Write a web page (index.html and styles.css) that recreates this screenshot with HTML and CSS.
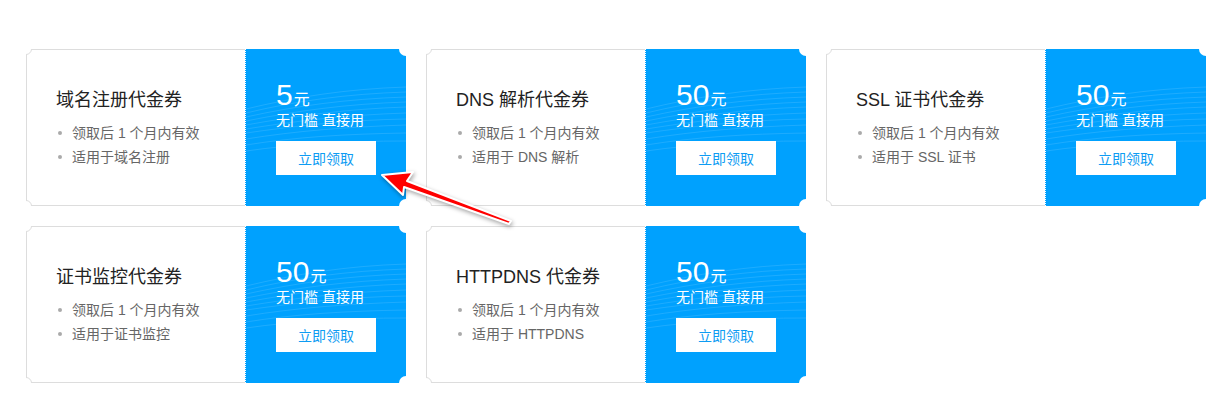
FILE: index.html
```html
<!DOCTYPE html>
<html lang="zh-CN">
<head>
    <meta charset="UTF-8">
    <title>代金券</title>
    <link rel="stylesheet" href="styles.css">
</head>
<body>
    <!-- Список купонов -->
    <div class="coupons">
        <div class="coupon">
            <div class="coupon-info">
                <h3>域名注册代金券</h3>
                <ul>
                    <li>领取后 1 个月内有效</li>
                    <li>适用于域名注册</li>
                </ul>
            </div>
            <div class="coupon-value">
                <svg class="waves" viewBox="0 0 161 157" preserveAspectRatio="none">
                    <path d="M0 60 C50 48 100 40 161 38 M0 64 C50 52 100 45 161 43 M0 68 C50 57 100 50 161 48 M0 72 C50 62 100 55 161 53 M0 76 C50 67 100 60 161 58 M0 80 C50 72 100 66 161 64 M0 84 C50 77 100 71 161 70 M0 90 C50 82 100 78 161 76 M0 96 C50 88 100 85 161 84 M0 102 C50 95 100 92 161 92"/>
                </svg>
                <div class="amount">5<span>元</span></div>
                <div class="note">无门槛 直接用</div>
                <button class="take-btn">立即领取</button>
            </div>
        </div>
        <div class="coupon">
            <div class="coupon-info">
                <h3>DNS 解析代金券</h3>
                <ul>
                    <li>领取后 1 个月内有效</li>
                    <li>适用于 DNS 解析</li>
                </ul>
            </div>
            <div class="coupon-value">
                <svg class="waves" viewBox="0 0 161 157" preserveAspectRatio="none">
                    <path d="M0 60 C50 48 100 40 161 38 M0 64 C50 52 100 45 161 43 M0 68 C50 57 100 50 161 48 M0 72 C50 62 100 55 161 53 M0 76 C50 67 100 60 161 58 M0 80 C50 72 100 66 161 64 M0 84 C50 77 100 71 161 70 M0 90 C50 82 100 78 161 76 M0 96 C50 88 100 85 161 84 M0 102 C50 95 100 92 161 92"/>
                </svg>
                <div class="amount">50<span>元</span></div>
                <div class="note">无门槛 直接用</div>
                <button class="take-btn">立即领取</button>
            </div>
        </div>
        <div class="coupon">
            <div class="coupon-info">
                <h3>SSL 证书代金券</h3>
                <ul>
                    <li>领取后 1 个月内有效</li>
                    <li>适用于 SSL 证书</li>
                </ul>
            </div>
            <div class="coupon-value">
                <svg class="waves" viewBox="0 0 161 157" preserveAspectRatio="none">
                    <path d="M0 60 C50 48 100 40 161 38 M0 64 C50 52 100 45 161 43 M0 68 C50 57 100 50 161 48 M0 72 C50 62 100 55 161 53 M0 76 C50 67 100 60 161 58 M0 80 C50 72 100 66 161 64 M0 84 C50 77 100 71 161 70 M0 90 C50 82 100 78 161 76 M0 96 C50 88 100 85 161 84 M0 102 C50 95 100 92 161 92"/>
                </svg>
                <div class="amount">50<span>元</span></div>
                <div class="note">无门槛 直接用</div>
                <button class="take-btn">立即领取</button>
            </div>
        </div>
        <div class="coupon">
            <div class="coupon-info">
                <h3>证书监控代金券</h3>
                <ul>
                    <li>领取后 1 个月内有效</li>
                    <li>适用于证书监控</li>
                </ul>
            </div>
            <div class="coupon-value">
                <svg class="waves" viewBox="0 0 161 157" preserveAspectRatio="none">
                    <path d="M0 60 C50 48 100 40 161 38 M0 64 C50 52 100 45 161 43 M0 68 C50 57 100 50 161 48 M0 72 C50 62 100 55 161 53 M0 76 C50 67 100 60 161 58 M0 80 C50 72 100 66 161 64 M0 84 C50 77 100 71 161 70 M0 90 C50 82 100 78 161 76 M0 96 C50 88 100 85 161 84 M0 102 C50 95 100 92 161 92"/>
                </svg>
                <div class="amount">50<span>元</span></div>
                <div class="note">无门槛 直接用</div>
                <button class="take-btn">立即领取</button>
            </div>
        </div>
        <div class="coupon">
            <div class="coupon-info">
                <h3>HTTPDNS 代金券</h3>
                <ul>
                    <li>领取后 1 个月内有效</li>
                    <li>适用于 HTTPDNS</li>
                </ul>
            </div>
            <div class="coupon-value">
                <svg class="waves" viewBox="0 0 161 157" preserveAspectRatio="none">
                    <path d="M0 60 C50 48 100 40 161 38 M0 64 C50 52 100 45 161 43 M0 68 C50 57 100 50 161 48 M0 72 C50 62 100 55 161 53 M0 76 C50 67 100 60 161 58 M0 80 C50 72 100 66 161 64 M0 84 C50 77 100 71 161 70 M0 90 C50 82 100 78 161 76 M0 96 C50 88 100 85 161 84 M0 102 C50 95 100 92 161 92"/>
                </svg>
                <div class="amount">50<span>元</span></div>
                <div class="note">无门槛 直接用</div>
                <button class="take-btn">立即领取</button>
            </div>
        </div>
    </div>

    <!-- Красная стрелка-указатель -->
    <svg class="pointer" width="1222" height="406" viewBox="0 0 1222 406">
        <polygon points="382,175 413,172 407,181 511,221 509,224 404,187 403,195"/>
    </svg>
</body>
</html>
```

FILE: styles.css
```css
/* Основной стиль */
body {
    margin: 0;
    padding: 0;
    background: #fff;
    font-family: "Liberation Sans", "Noto Sans CJK SC", sans-serif;
    position: relative;
}
.coupons {
    display: grid;
    grid-template-columns: repeat(3, 380px);
    grid-auto-rows: 157px;
    gap: 20px;
    padding: 49px 0 0 26px;
}
.coupon {
    display: flex;
    height: 157px;
    overflow: hidden;
}

/* Левая часть купона */
.coupon-info {
    position: relative;
    width: 219px;
    box-sizing: border-box;
    border: 1px solid #ddd;
    border-right: none;
    padding: 38px 0 0 29px;
}
.coupon-info::before,
.coupon-info::after {
    content: "";
    position: absolute;
    left: -7px;
    width: 12px;
    height: 12px;
    box-sizing: border-box;
    border: 1px solid #ddd;
    border-radius: 50%;
    background: #fff;
}
.coupon-info::before {
    top: -7px;
}
.coupon-info::after {
    bottom: -7px;
}
.coupon-info h3 {
    margin: 0;
    font-size: 18px;
    font-weight: normal;
    line-height: 24px;
    color: #222;
}
.coupon-info ul {
    list-style: none;
    margin: 9px 0 0;
    padding: 0;
}
.coupon-info li {
    position: relative;
    padding-left: 16px;
    font-size: 14px;
    line-height: 24px;
    color: #666;
}
.coupon-info li::before {
    content: "";
    position: absolute;
    left: 2px;
    top: 10px;
    width: 4px;
    height: 4px;
    border-radius: 50%;
    background: #aaa;
}

/* Правая синяя часть */
.coupon-value {
    position: relative;
    width: 161px;
    box-sizing: border-box;
    background: #00a1fe;
    border-left: 1px dotted #fff;
    padding: 31px 0 0 30px;
    color: #fff;
}
.coupon-value::before,
.coupon-value::after {
    content: "";
    position: absolute;
    right: -7px;
    width: 14px;
    height: 14px;
    border-radius: 50%;
    background: #fff;
    z-index: 2;
}
.coupon-value::before {
    top: -7px;
}
.coupon-value::after {
    bottom: -7px;
}
.waves {
    position: absolute;
    left: 0;
    top: 0;
    width: 100%;
    height: 100%;
}
.waves path {
    fill: none;
    stroke: rgba(255, 255, 255, 0.12);
    stroke-width: 1;
}
.amount {
    position: relative;
    font-size: 30px;
    line-height: 30px;
    height: 30px;
}
.amount span {
    font-size: 16px;
    margin-left: 1px;
}
.note {
    position: relative;
    font-size: 14px;
    line-height: 20px;
}
.take-btn {
    position: relative;
    display: block;
    width: 100px;
    height: 34px;
    margin-top: 11px;
    padding: 0;
    border: none;
    background: #fff;
    color: #0e9cf3;
    font-family: inherit;
    font-size: 14px;
    cursor: pointer;
}

/* Стрелка поверх купонов */
.pointer {
    position: absolute;
    left: 0;
    top: 0;
    pointer-events: none;
    filter: drop-shadow(1px 2px 2px rgba(0, 0, 0, 0.35));
}
.pointer polygon {
    fill: #f00;
    stroke: #fff;
    stroke-width: 2;
    stroke-linejoin: round;
}
```
